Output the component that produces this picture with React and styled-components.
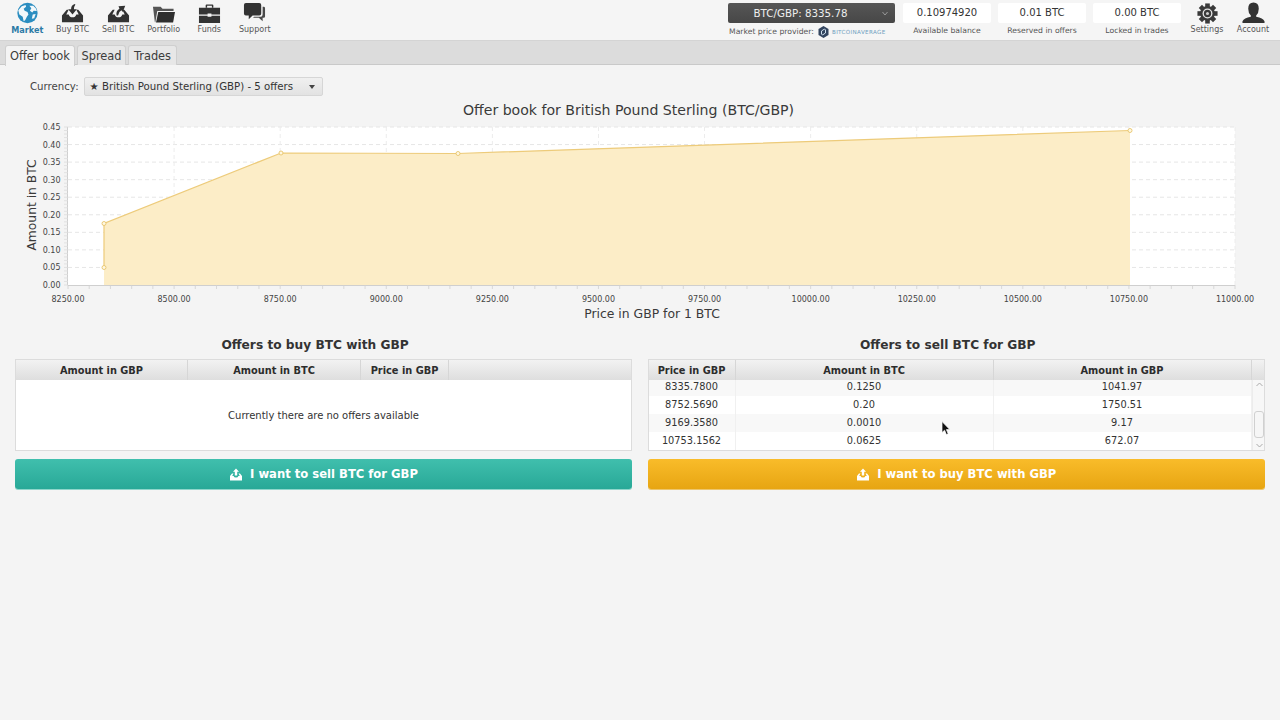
import React from 'react';
import styled, { createGlobalStyle } from 'styled-components';

const Global = createGlobalStyle`
  html, body { margin: 0; padding: 0; height: 720px; overflow: hidden; background: #f4f4f4; }
  body { font-family: "DejaVu Sans", Verdana, sans-serif; color: #333; }
  * { box-sizing: border-box; }
`;

const Page = styled.div`
  position: relative;
  width: 1280px;
  height: 720px;
  background: #f4f4f4;
  overflow: hidden;
`;
const Header = styled.header`
  height: 40px;
  display: flex;
  justify-content: space-between;
  background: #f5f5f5;
  padding: 0 4px 0 4.5px;
`;
const Group = styled.div`
  display: flex;
`;
const NavItem = styled.div`
  width: ${p => p.$w || 45.5}px;
  display: flex;
  flex-direction: column;
  align-items: center;
  padding-top: 1.5px;
`;
const NavIcon = styled.svg`
  width: 23px;
  height: 23px;
  display: block;
  color: #333;
`;
const NavLabel = styled.span`
  font-size: ${p => (p.$active ? 8.1 : 8)}px;
  line-height: 10px;
  margin-top: 0.5px;
  font-weight: ${p => (p.$active ? 700 : 400)};
  color: ${p => (p.$active ? '#2b7ba6' : '#555')};
  white-space: nowrap;
`;
const Stats = styled.div`
  display: flex;
  gap: 7px;
  padding-top: 3px;
  margin-right: 3px;
`;
const Stat = styled.div`
  width: ${p => p.$w || 88}px;
  margin-right: ${p => p.$mr || 0}px;
  display: flex;
  flex-direction: column;
  align-items: center;
`;
const ValueBox = styled.div`
  width: 100%;
  height: 20px;
  background: #fff;
  border-radius: 2px;
  font-size: 10px;
  line-height: 20px;
  text-align: center;
  color: #333;
`;
const Ticker = styled.div`
  width: 100%;
  height: 20px;
  position: relative;
  background: linear-gradient(#565656, #474747);
  border-radius: 2px;
  font-size: 10.3px;
  line-height: 20px;
  text-align: center;
  color: #eee;
  padding-right: 22px;
`;
const TickerChevron = styled.svg`
  position: absolute;
  right: 7px;
  top: 8px;
  width: 6px;
  height: 5px;
`;
const Caption = styled.div`
  margin-top: 2.5px;
  font-size: 7.7px;
  line-height: 10px;
  color: #555;
  white-space: nowrap;
  display: flex;
  align-items: center;
  align-self: ${p => (p.$start ? 'flex-start' : 'center')};
  margin-left: ${p => (p.$start ? 1 : 0)}px;
`;
const ProviderLogo = styled.svg`
  width: 11px;
  height: 12px;
  margin: 0 3px 0 4px;
`;
const ProviderName = styled.span`
  font-size: 5.6px;
  letter-spacing: .35px;
  color: #6f9fc0;
`;
const TabBar = styled.nav`
  height: 25px;
  padding: 4px 0 0 5px;
  display: flex;
  gap: 2px;
  background: #dcdcdc;
  border-top: 1px solid #d4d4d4;
  border-bottom: 1px solid #c9c9c9;
`;
const Tab = styled.div`
  height: ${p => (p.$active ? 21 : 20)}px;
  width: ${p => p.$w}px;
  text-align: center;
  font-size: 11.4px;
  line-height: 20px;
  color: #3c3c3c;
  border: 1px solid #cfcfcf;
  border-bottom: 0;
  border-radius: 3px 3px 0 0;
  background: ${p => (p.$active ? '#f4f4f4' : '#e7e7e7')};
`;
const CurrencyRow = styled.div`
  display: flex;
  align-items: center;
  padding: 12px 0 0 30px;
  gap: 5px;
  height: 31px;
  font-size: 10.2px;
  color: #444;
`;
const Select = styled.div`
  width: 239px;
  height: 19px;
  padding: 0 6px 0 5px;
  display: flex;
  align-items: center;
  justify-content: space-between;
  background: linear-gradient(#f0f0f0, #e2e2e2);
  border: 1px solid #d6d6d6;
  border-radius: 2px;
  font-size: 10.2px;
  color: #333;
`;
const Caret = styled.span`
  width: 0;
  height: 0;
  margin-right: 1px;
  border-left: 3.5px solid transparent;
  border-right: 3.5px solid transparent;
  border-top: 4px solid #444;
`;
const ChartTitle = styled.h2`
  margin: 4px 0 0;
  height: 20px;
  padding-right: 23px;
  text-align: center;
  font-size: 14.1px;
  line-height: 20px;
  font-weight: 400;
  color: #3a3a3a;
`;
const ChartSvg = styled.svg`
  display: block;
  width: 1280px;
  height: 215px;
  font-family: "DejaVu Sans", Verdana, sans-serif;
`;
const Panels = styled.section`
  display: grid;
  grid-template-columns: 617px 617.5px;
  gap: 15.5px;
  padding: 0 15px;
`;
const Panel = styled.div`
  display: flex;
  flex-direction: column;
`;
const PanelTitle = styled.h3`
  margin: 0 0 6px;
  height: 18px;
  padding-right: 17px;
  text-align: center;
  font-size: 12.2px;
  line-height: 20px;
  font-weight: 700;
  color: #333;
`;
const Table = styled.div`
  height: 92px;
  display: flex;
  flex-direction: column;
  background: #fff;
  border: 1px solid #dcdcdc;
  overflow: hidden;
`;
const HeadRow = styled.div`
  flex: none;
  height: 20px;
  display: flex;
  background: linear-gradient(#f2f2f2, #dedede);
`;
const HeadCell = styled.div`
  width: ${p => (p.$w ? `${p.$w}px` : 'auto')};
  flex: ${p => (p.$w ? 'none' : 1)};
  text-align: center;
  font-size: 9.8px;
  line-height: 21px;
  font-weight: 700;
  color: #2c2c2c;
  white-space: nowrap;
  border-right: 1px solid #d6d6d6;
  &:last-child { border-right: 0; }
`;
const Empty = styled.div`
  flex: 1;
  display: flex;
  align-items: center;
  justify-content: center;
  font-size: 10px;
  color: #333;
`;
const ScrollArea = styled.div`
  flex: 1;
  display: flex;
  overflow: hidden;
`;
const Rows = styled.div`
  flex: 1;
  margin-top: -2.5px;
`;
const Row = styled.div`
  height: 18.2px;
  display: flex;
  background: ${p => (p.$alt ? '#f8f8f8' : '#fff')};
`;
const Cell = styled.div`
  width: ${p => p.$w}px;
  flex: none;
  text-align: center;
  font-size: 9.8px;
  line-height: 18px;
  color: #333;
  border-right: 1px solid #f0f0f0;
`;
const Scrollbar = styled.div`
  width: 13px;
  flex: none;
  position: relative;
  background: #f7f7f7;
  border-left: 1px solid #ececec;
`;
const Thumb = styled.div`
  position: absolute;
  left: 1px;
  right: 1px;
  top: 31px;
  height: 27px;
  background: #f6f6f6;
  border: 1px solid #d0d0d0;
  border-radius: 3px;
`;
const ScrollArrow = styled.svg`
  position: absolute;
  left: 3px;
  width: 7px;
  height: 5px;
  ${p => (p.$up ? 'top: 2px;' : 'bottom: 2px;')}
`;
const ActionButton = styled.button`
  margin-top: 8px;
  height: 30px;
  display: flex;
  align-items: center;
  justify-content: center;
  gap: 7px;
  border: 0;
  border-radius: 3px;
  font-family: inherit;
  font-size: 11.6px;
  font-weight: 700;
  color: #fff;
  background: ${p => (p.$tone === 'sell'
    ? 'linear-gradient(#40bfad, #28a897)'
    : 'linear-gradient(#f9bc2a, #e7a512)')};
  box-shadow: 0 1px 0 ${p => (p.$tone === 'sell' ? '#8fd6cb' : '#edc66d')};
`;
const Cursor = styled.svg`
  position: absolute;
  left: 941px;
  top: 421px;
  width: 10px;
  height: 15px;
`;

const GlobeIcon = () => (
  <NavIcon viewBox="0 0 24 24">
    <circle cx="12" cy="11.5" r="10.6" fill="#2b8dc0" />
    <path d="M2.4 8.5 L6 4.5 L10 3 L10.5 5 L8 7 L9 9 L12 10.5 L13 13 L11.5 15 L9.5 19 L8 20 L7 15.5 L3.5 13 Z" fill="#f2f8fb" />
    <path d="M14 4 L18 3.8 L21 7 L21.7 9.5 L18.5 9 L17 11 L14.5 9 L16 6.5 Z" fill="#f2f8fb" />
    <path d="M17.5 13 L20.5 12.5 L19 17 L16.5 17.5 Z" fill="#f2f8fb" />
  </NavIcon>
);
const BuyIcon = () => (
  <NavIcon viewBox="0 0 24 24">
    <path d="M1 21 V14 L6 8 H8 L5.5 13 H8 Q9 16 12 16 Q15 16 16 13 H18.5 L16 8 H18 L23 14 V21 Z" fill="#333" />
    <path d="M14.5 2 Q10.5 3 10.5 7.5 H7.5 L12 13 L16.5 7.5 H13.5 Q13.3 5 15 2.5 Z" fill="#333" />
  </NavIcon>
);
const SellIcon = () => (
  <NavIcon viewBox="0 0 24 24">
    <path d="M1 21 V14 L6 8 H8 L5.5 13 H8 Q9 16 12 16 Q15 16 16 13 H18.5 L16 8 H18 L23 14 V21 Z" fill="#333" />
    <path d="M10 14 Q9 9 13 7 L12 4.5 L19 4 L16.5 10.5 L15 8.5 Q12 10 11.5 14 Z" fill="#333" />
  </NavIcon>
);
const FolderIcon = () => (
  <NavIcon viewBox="0 0 24 24">
    <path d="M1 5 H9 L11 7 H22.5 V9.5 H5.5 L3.5 21 H3 Z" fill="#555" />
    <path d="M6.5 10.5 H24 L22 21.5 H4.2 Z" fill="#2e2e2e" />
  </NavIcon>
);
const CaseIcon = () => (
  <NavIcon viewBox="0 0 24 24">
    <path d="M8 6 V3.5 Q8 2.5 9 2.5 H15 Q16 2.5 16 3.5 V6 H14.5 V4 H9.5 V6 Z" fill="#333" />
    <path d="M1 6 H23 V13 H14 V12 H10 V13 H1 Z" fill="#333" />
    <path d="M1 14.3 H10 V15.5 H14 V14.3 H23 V22 H1 Z" fill="#333" />
  </NavIcon>
);
const ChatIcon = () => (
  <NavIcon viewBox="0 0 24 24">
    <path d="M3 1 H17 Q19 1 19 3 V12 Q19 14 17 14 H10 L6 18 V14 H3 Q1 14 1 12 V3 Q1 1 3 1 Z" fill="#333" />
    <path d="M20.5 5 H21.5 Q23 5 23 6.5 V15 Q23 16.5 21.5 16.5 H20.5 V20 L16.5 16.5 H10.5 L11.5 15.5 H17.5 Q20.5 15.5 20.5 12.5 Z" fill="#4a4a4a" />
  </NavIcon>
);
const GearIcon = () => (
  <NavIcon viewBox="0 0 24 24">
    {[0, 45, 90, 135, 180, 225, 270, 315].map(a => (
      <rect key={a} x="9.6" y="1.5" width="4.8" height="5" fill="#3a3a3a" transform={`rotate(${a} 12 12)`} />
    ))}
    <circle cx="12" cy="12" r="7.7" fill="#3a3a3a" />
    <circle cx="12" cy="12" r="5.2" fill="#e6e6e6" />
    <circle cx="12" cy="12" r="3.8" fill="#3a3a3a" />
    <circle cx="12" cy="12" r="1.6" fill="#ccc" />
  </NavIcon>
);
const PersonIcon = () => (
  <NavIcon viewBox="0 0 24 24">
    <path d="M12 0.5 Q17.5 0.5 17.5 7 Q17.5 11.5 14.8 14 V15.5 Q22 17 23.5 20 V22 H0.5 V20 Q2 17 9.2 15.5 V14 Q6.5 11.5 6.5 7 Q6.5 0.5 12 0.5 Z" fill="#333" />
  </NavIcon>
);
const TrayIcon = () => (
  <svg width="14" height="13" viewBox="0 0 14 13">
    <path d="M1 12.5 V8 L3 5.5 H4.5 L3.2 8 H4.6 Q5 9.6 7 9.6 Q9 9.6 9.4 8 H10.8 L9.5 5.5 H11 L13 8 V12.5 Z" fill="#fff" />
    <path d="M7 0.5 L10 3.8 H8.2 V7.5 H5.8 V3.8 H4 Z" fill="#fff" />
  </svg>
);

const X0 = 68, X1 = 1235, Y0 = 165, Y1 = 7;
const sx = v => X0 + ((v - 8250) / 2750) * (X1 - X0);
const sy = v => Y0 - (v / 0.45) * (Y0 - Y1);
const xMajor = [8250, 8500, 8750, 9000, 9250, 9500, 9750, 10000, 10250, 10500, 10750, 11000];
const yMajor = [0, .05, .1, .15, .2, .25, .3, .35, .4, .45];
const points = [[104, 147.5], [104, 103.5], [281, 33], [458, 33.5], [1130, 10.5]];

const Chart = () => {
  const line = points.map(p => p.join(',')).join(' ');
  const xMinor = Array.from({ length: 56 }, (_, i) => 8250 + i * 50);
  const yMinor = Array.from({ length: 46 }, (_, i) => i * 0.01);
  return (
    <ChartSvg viewBox="0 0 1280 215">
      <rect x={X0} y={Y1} width={X1 - X0} height={Y0 - Y1} fill="#fff" />
      {yMajor.slice(1).map(v => (
        <line key={v} x1={X0} x2={X1} y1={sy(v)} y2={sy(v)} stroke="#e6e6e6" strokeWidth="1" strokeDasharray="4 3" />
      ))}
      {xMajor.slice(1).map(v => (
        <line key={v} x1={sx(v)} x2={sx(v)} y1={Y1} y2={Y0} stroke="#ececec" strokeWidth="1" strokeDasharray="4 3" />
      ))}
      <polygon points={`104,${Y0} ${line} 1130,${Y0}`} fill="#fcedc7" />
      <polyline points={line} fill="none" stroke="#edcb7a" strokeWidth="1.2" />
      {points.map(p => (
        <circle key={p.join()} cx={p[0]} cy={p[1]} r="2" fill="#fff8e2" stroke="#e8c56c" strokeWidth="0.9" />
      ))}
      <line x1={X0 - .5} x2={X0 - .5} y1={Y1} y2={Y0} stroke="#cfcfcf" />
      <line x1={X0} x2={X1} y1={Y0 + .5} y2={Y0 + .5} stroke="#cfcfcf" />
      {yMinor.map(v => (
        <line key={v} x1={X0 - 4} x2={X0} y1={sy(v)} y2={sy(v)} stroke="#dcdcdc" strokeWidth="0.8" />
      ))}
      {xMinor.map(v => (
        <line key={v} x1={sx(v)} x2={sx(v)} y1={Y0} y2={Y0 + 4} stroke="#d0d0d0" strokeWidth="0.8" />
      ))}
      <g fontSize="8" fill="#444" textAnchor="end">
        {yMajor.map(v => (
          <text key={v} x={X0 - 7.5} y={sy(v) + 3}>{v.toFixed(2)}</text>
        ))}
      </g>
      <g fontSize="8" fill="#444" textAnchor="middle">
        {xMajor.map(v => (
          <text key={v} x={sx(v)} y={Y0 + 16.5}>{v.toFixed(2)}</text>
        ))}
      </g>
      <text x="652" y="198" fontSize="12.4" fill="#3a3a3a" textAnchor="middle">Price in GBP for 1 BTC</text>
      <text transform="translate(36 85) rotate(-90)" fontSize="12.3" fill="#3a3a3a" textAnchor="middle">Amount in BTC</text>
    </ChartSvg>
  );
};

const sellRows = [
  ['8335.7800', '0.1250', '1041.97'],
  ['8752.5690', '0.20', '1750.51'],
  ['9169.3580', '0.0010', '9.17'],
  ['10753.1562', '0.0625', '672.07'],
];

export default function App() {
  return (
    <Page>
      <Global />
      <Header>
        <Group>
          <NavItem><GlobeIcon /><NavLabel $active>Market</NavLabel></NavItem>
          <NavItem><BuyIcon /><NavLabel>Buy BTC</NavLabel></NavItem>
          <NavItem><SellIcon /><NavLabel>Sell BTC</NavLabel></NavItem>
          <NavItem><FolderIcon /><NavLabel>Portfolio</NavLabel></NavItem>
          <NavItem><CaseIcon /><NavLabel>Funds</NavLabel></NavItem>
          <NavItem><ChatIcon /><NavLabel>Support</NavLabel></NavItem>
        </Group>
        <Group>
          <Stats>
            <Stat $w={167} $mr={1}>
              <Ticker>
                BTC/GBP: 8335.78
                <TickerChevron viewBox="0 0 6 5"><path d="M.5 1 L3 4 L5.5 1" fill="none" stroke="#999" /></TickerChevron>
              </Ticker>
              <Caption $start>
                Market price provider:
                <ProviderLogo viewBox="0 0 11 12">
                  <path d="M5.5 0 L10.5 3 V9 L5.5 12 L.5 9 V3 Z" fill="#33455f" />
                  <path d="M3.5 8 V5 L6.5 3 L7.5 4 V7 L4.5 9 Z" fill="none" stroke="#cfe0ee" strokeWidth="1" />
                </ProviderLogo>
                <ProviderName>BITCOINAVERAGE</ProviderName>
              </Caption>
            </Stat>
            <Stat><ValueBox>0.10974920</ValueBox><Caption>Available balance</Caption></Stat>
            <Stat><ValueBox>0.01 BTC</ValueBox><Caption>Reserved in offers</Caption></Stat>
            <Stat><ValueBox>0.00 BTC</ValueBox><Caption>Locked in trades</Caption></Stat>
          </Stats>
          <NavItem $w={46}><GearIcon /><NavLabel>Settings</NavLabel></NavItem>
          <NavItem $w={46}><PersonIcon /><NavLabel>Account</NavLabel></NavItem>
        </Group>
      </Header>
      <TabBar>
        <Tab $active $w={70}>Offer book</Tab>
        <Tab $w={49}>Spread</Tab>
        <Tab $w={49}>Trades</Tab>
      </TabBar>
      <CurrencyRow>
        Currency:
        <Select>★ British Pound Sterling (GBP) - 5 offers<Caret /></Select>
      </CurrencyRow>
      <ChartTitle>Offer book for British Pound Sterling (BTC/GBP)</ChartTitle>
      <Chart />
      <Panels>
        <Panel>
          <PanelTitle>Offers to buy BTC with GBP</PanelTitle>
          <Table>
            <HeadRow>
              <HeadCell $w={172}>Amount in GBP</HeadCell>
              <HeadCell $w={173}>Amount in BTC</HeadCell>
              <HeadCell $w={88}>Price in GBP</HeadCell>
              <HeadCell />
            </HeadRow>
            <Empty>Currently there are no offers available</Empty>
          </Table>
          <ActionButton $tone="sell"><TrayIcon />I want to sell BTC for GBP</ActionButton>
        </Panel>
        <Panel>
          <PanelTitle>Offers to sell BTC for GBP</PanelTitle>
          <Table>
            <HeadRow>
              <HeadCell $w={87}>Price in GBP</HeadCell>
              <HeadCell $w={258}>Amount in BTC</HeadCell>
              <HeadCell $w={258}>Amount in GBP</HeadCell>
              <HeadCell />
            </HeadRow>
            <ScrollArea>
              <Rows>
                {sellRows.map((r, i) => (
                  <Row key={r[0]} $alt={i % 2 === 0}>
                    <Cell $w={87}>{r[0]}</Cell>
                    <Cell $w={258}>{r[1]}</Cell>
                    <Cell $w={258}>{r[2]}</Cell>
                  </Row>
                ))}
              </Rows>
              <Scrollbar>
                <ScrollArrow $up viewBox="0 0 7 5"><path d="M.5 4 L3.5 1 L6.5 4" fill="none" stroke="#aaa" /></ScrollArrow>
                <Thumb />
                <ScrollArrow viewBox="0 0 7 5"><path d="M.5 1 L3.5 4 L6.5 1" fill="none" stroke="#aaa" /></ScrollArrow>
              </Scrollbar>
            </ScrollArea>
          </Table>
          <ActionButton $tone="buy"><TrayIcon />I want to buy BTC with GBP</ActionButton>
        </Panel>
      </Panels>
      <Cursor viewBox="0 0 10 15">
        <path d="M1 .5 V11.5 L3.6 9.2 L5.4 13.6 L7.2 12.8 L5.4 8.6 H8.8 Z" fill="#111" stroke="#fff" strokeWidth=".7" />
      </Cursor>
    </Page>
  );
}
